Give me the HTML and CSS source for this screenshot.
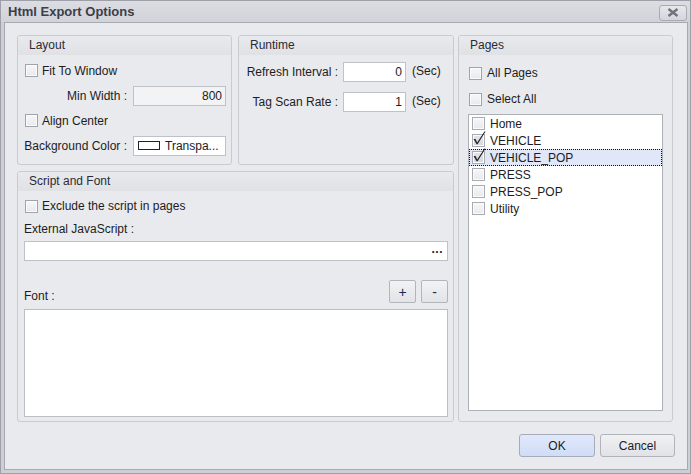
FILE: index.html
```html
<!DOCTYPE html>
<html>
<head>
<meta charset="utf-8">
<title>Html Export Options</title>
<link rel="stylesheet" href="styles.css">
</head>
<body>
<div class="window">
	<div class="titlebar">
		<span class="title">Html Export Options</span>
		<span class="close"><svg width="12" height="9" viewBox="0 0 12 9"><path d="M1.5 1 L10.5 8 M10.5 1 L1.5 8" stroke="#70727e" stroke-width="2.4"/></svg></span>
	</div>
	<div class="client">
		<div class="panels">
			<div class="left-col">
				<div class="top-row">
					<div class="panel layout">
						<div class="panel-head">Layout</div>
						<div class="panel-body">
							<label class="check-row"><span class="box"></span>Fit To Window</label>
							<div class="field-row"><span class="lbl">Min Width :</span><span class="input disabled num">800</span></div>
							<label class="check-row"><span class="box"></span>Align Center</label>
							<div class="field-row"><span class="lbl">Background Color :</span><span class="input color"><span class="swatch"></span>Transpa...</span></div>
						</div>
					</div>
					<div class="panel runtime">
						<div class="panel-head">Runtime</div>
						<div class="panel-body">
							<div class="rt-row"><span class="lbl">Refresh Interval :</span><span class="input num">0</span><span class="unit">(Sec)</span></div>
							<div class="rt-row"><span class="lbl">Tag Scan Rate :</span><span class="input num">1</span><span class="unit">(Sec)</span></div>
						</div>
					</div>
				</div>
				<div class="panel script">
					<div class="panel-head">Script and Font</div>
					<div class="panel-body">
						<label class="check-row"><span class="box"></span>Exclude the script in pages</label>
						<div class="text-row">External JavaScript :</div>
						<div class="input wide"><span class="dots">...</span></div>
						<div class="font-row">
							<span class="font-lbl">Font :</span>
							<span class="small-btn plus">+</span>
							<span class="small-btn">-</span>
						</div>
						<div class="font-box"></div>
					</div>
				</div>
			</div>
			<div class="panel pages">
				<div class="panel-head">Pages</div>
				<div class="panel-body">
					<label class="check-row"><span class="box"></span>All Pages</label>
					<label class="check-row"><span class="box"></span>Select All</label>
					<div class="list">
						<div class="item"><span class="box"></span>Home</div>
						<div class="item"><span class="box checked"><svg width="15" height="16" viewBox="0 -3 15 16"><path d="M1.5 5 L3.6 5 L5.2 8.6 L12.4 -2.5 L13.6 -2.5 L5.6 10.3 L4.6 10.3 Z" fill="#26262c"/></svg></span>VEHICLE</div>
						<div class="item selected"><span class="box checked"><svg width="15" height="16" viewBox="0 -3 15 16"><path d="M1.5 5 L3.6 5 L5.2 8.6 L12.4 -2.5 L13.6 -2.5 L5.6 10.3 L4.6 10.3 Z" fill="#26262c"/></svg></span>VEHICLE_POP</div>
						<div class="item"><span class="box"></span>PRESS</div>
						<div class="item"><span class="box"></span>PRESS_POP</div>
						<div class="item"><span class="box"></span>Utility</div>
					</div>
				</div>
			</div>
		</div>
		<div class="actions">
			<span class="btn ok">OK</span>
			<span class="btn">Cancel</span>
		</div>
	</div>
</div>
</body>
</html>
```

FILE: styles.css
```css
* { margin: 0; padding: 0; box-sizing: border-box; }
body { width: 691px; height: 474px; overflow: hidden; font-family: "Liberation Sans", Arial, sans-serif; font-size: 12px; color: #1c1c24; background: #cfd1d8; }

.window { width: 691px; height: 474px; display: flex; flex-direction: column; border: 1px solid #9ea0a9; background: #cdcfd6; }
.titlebar { height: 21px; flex: none; display: flex; align-items: center; justify-content: space-between; padding: 0 3px 0 7px; background: linear-gradient(#dcdde3, #d1d3d9); }
.title { font-size: 13px; font-weight: bold; color: #3b3e4b; line-height: 21px; }
.close { width: 28px; height: 16px; margin-top: 2px; display: flex; align-items: center; justify-content: center; border: 1px solid #a9abb3; border-radius: 3px; background: linear-gradient(#e6e7eb, #d5d6dc); }

.client { flex: 1; margin: 0 2px 3px 3px; border: 1px solid #a7a9b2; background: #e9eaee; padding: 12px 13px 12px 12px; display: flex; flex-direction: column; }
.panels { display: flex; gap: 4px; height: 387px; }
.left-col { width: 437px; display: flex; flex-direction: column; gap: 6px; }
.top-row { display: flex; gap: 6px; height: 130px; }

.panel { border: 1px solid #c9cbd1; border-radius: 3px; background: #e9eaee; display: flex; flex-direction: column; }
.panel-head { height: 19px; line-height: 19px; padding-left: 11px; color: #2b2b35; background: linear-gradient(#e9eaee, #e0e1e5); border-radius: 2px 2px 0 0; flex: none; }
.panel-body { flex: 1; display: flex; flex-direction: column; }

.layout { width: 215px; }
.runtime { width: 216px; }
.script { flex: 1; }
.pages { width: 215px; }

.box { width: 13px; height: 13px; flex: none; border: 1px solid #a1a3ab; background: linear-gradient(#f7f7f9, #e9e9ed); box-shadow: inset 0 0 0 1px #fbfbfc; position: relative; }
.box svg { position: absolute; left: -1px; top: -4px; }
.check-row { display: flex; align-items: center; gap: 4px; height: 25px; padding-left: 1px; }

.layout .panel-body { padding: 3px 5px 0 6px; }
.field-row { display: grid; grid-template-columns: 103px 93px; column-gap: 6px; align-items: center; height: 25px; }
.lbl { text-align: right; white-space: nowrap; }
.input { height: 20px; border: 1px solid #bfc1c8; background: #fff; display: flex; align-items: center; padding: 0 3px; }
.input.num { justify-content: flex-end; }
.input.disabled { background: #f3f3f5; }
.input.color { padding-left: 4px; gap: 5px; }
.swatch { width: 22px; height: 9px; border: 1px solid #1f1f3a; background: #fff; }

.runtime .panel-body { padding: 2px 0 0 4px; }
.rt-row { display: grid; grid-template-columns: 95px 63px auto; column-gap: 5px; align-items: center; height: 30px; }
.unit { padding-left: 1px; margin-top: -3px; }

.script .panel-body { padding: 2px 5px 4px 6px; }
.check-row.tall { height: 26px; }
.script .check-row { height: 26px; }
.text-row { height: 20px; line-height: 20px; }
.input.wide { margin-top: 2px; justify-content: flex-end; padding-right: 4px; }
.dots { font-weight: bold; letter-spacing: 0.5px; line-height: 8px; margin-top: -4px; }
.font-row { display: flex; align-items: flex-end; gap: 5px; margin-top: 19px; height: 23px; }
.font-lbl { flex: 1; line-height: 14px; }
.small-btn { width: 27px; height: 23px; border: 1px solid #b3b5bd; border-radius: 2px; background: linear-gradient(#f3f3f5, #e2e3e7); display: flex; align-items: center; justify-content: center; font-size: 14px; color: #1d2754; }
.font-box { flex: 1; margin-top: 6px; border: 1px solid #bcbec5; background: #fff; }

.pages .panel-body { padding: 5px 9px 10px 9px; }
.pages .check-row { height: 26px; padding-left: 1px; gap: 5px; }
.list { flex: 1; margin-top: 2px; border: 1px solid #aeb0b8; background: #fff; }
.item { height: 17px; display: flex; align-items: center; gap: 5px; padding-left: 2px; border: 1px dotted transparent; }
.item.selected { background: #dfe7f8; border-color: #111; }
.item .box { border-color: #a9abb3; }
.box.checked { background: linear-gradient(#e4e5e9, #d6d7dc); }

.actions { display: flex; justify-content: flex-end; gap: 5px; margin-top: 12px; margin-right: -1px; }
.btn { width: 75px; height: 23px; display: flex; align-items: center; justify-content: center; border: 1px solid #b2b4bc; border-radius: 3px; background: linear-gradient(#f1f1f3, #e1e2e6); }
.btn.ok { width: 76px; border-color: #a6abba; background: linear-gradient(#e0e8fb, #d0dcf7); }
```
